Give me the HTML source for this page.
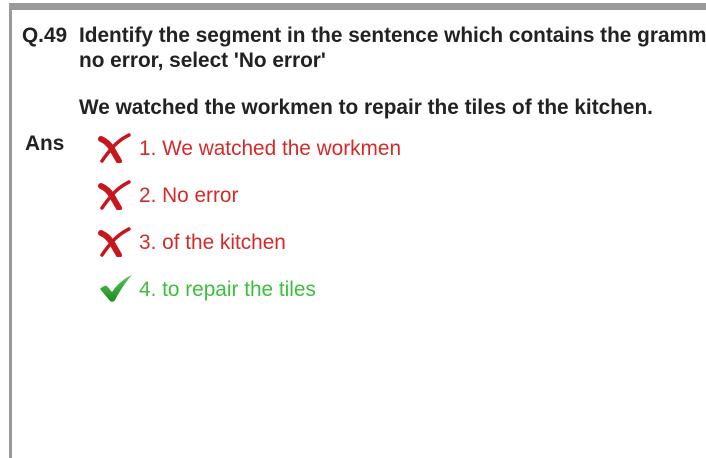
<!DOCTYPE html>
<html><head><style>
body{margin:0;width:706px;height:458px;background:#fff;overflow:hidden;position:relative;font-family:"Liberation Sans",Arial,sans-serif;}
#w{position:absolute;left:0;top:0;width:706px;height:458px;overflow:hidden;}
.topbar{position:absolute;left:9px;top:3px;right:0;height:7px;background:#9a9a9a;}
.left{position:absolute;left:9px;top:3px;width:3px;bottom:0;background:#9a9a9a;}
.t{position:absolute;white-space:nowrap;font-size:20.8px;}
.b{font-weight:bold;color:#222;}
.r{color:#d42a2a;}
.g{color:#3cbf3c;}
svg{position:absolute;}
</style></head><body><div id="w">
<div class="topbar"></div><div class="left"></div>
<div class="t b" style="left:22px;top:24px">Q.49</div>
<div class="t b" style="left:79px;top:24px">Identify the segment in the sentence which contains the grammatical error. If there is</div>
<div class="t b" style="left:79px;top:49px">no error, select 'No error'</div>
<div class="t b" style="left:79px;top:96px">We watched the workmen to repair the tiles of the kitchen.</div>
<div class="t b" style="left:25px;top:132px">Ans</div>

<svg style="left:97px;top:133px" width="36" height="30" viewBox="0 0 36 30"><path d="M4 6 Q11 9 15 16 Q19 23 22 28" stroke="#c8161d" stroke-width="6" fill="none" stroke-linecap="round"/><path d="M32 2 Q22 7 15 15 Q9 22 5 28" stroke="#c8161d" stroke-width="3.5" fill="none" stroke-linecap="round"/></svg>
<div class="t r" style="left:139px;top:137px">1. We watched the workmen</div>

<svg style="left:97px;top:180px" width="36" height="30" viewBox="0 0 36 30"><path d="M4 6 Q11 9 15 16 Q19 23 22 28" stroke="#c8161d" stroke-width="6" fill="none" stroke-linecap="round"/><path d="M32 2 Q22 7 15 15 Q9 22 5 28" stroke="#c8161d" stroke-width="3.5" fill="none" stroke-linecap="round"/></svg>
<div class="t r" style="left:139px;top:184px">2. No error</div>

<svg style="left:97px;top:227px" width="36" height="30" viewBox="0 0 36 30"><path d="M4 6 Q11 9 15 16 Q19 23 22 28" stroke="#c8161d" stroke-width="6" fill="none" stroke-linecap="round"/><path d="M32 2 Q22 7 15 15 Q9 22 5 28" stroke="#c8161d" stroke-width="3.5" fill="none" stroke-linecap="round"/></svg>
<div class="t r" style="left:139px;top:231px">3. of the kitchen</div>

<svg style="left:98px;top:272px" width="36" height="32" viewBox="0 0 36 32"><defs><linearGradient id="gg" x1="0" y1="0" x2="0" y2="1"><stop offset="0" stop-color="#5cc85c"/><stop offset="1" stop-color="#1e8a1e"/></linearGradient></defs><path d="M2 17 Q6 13 9 14 L14 20 Q22 8 34 3 Q25 13 17 28 Q15 31 12 29 Z" fill="url(#gg)"/></svg>
<div class="t g" style="left:139px;top:278px">4. to repair the tiles</div>
</div></body></html>
